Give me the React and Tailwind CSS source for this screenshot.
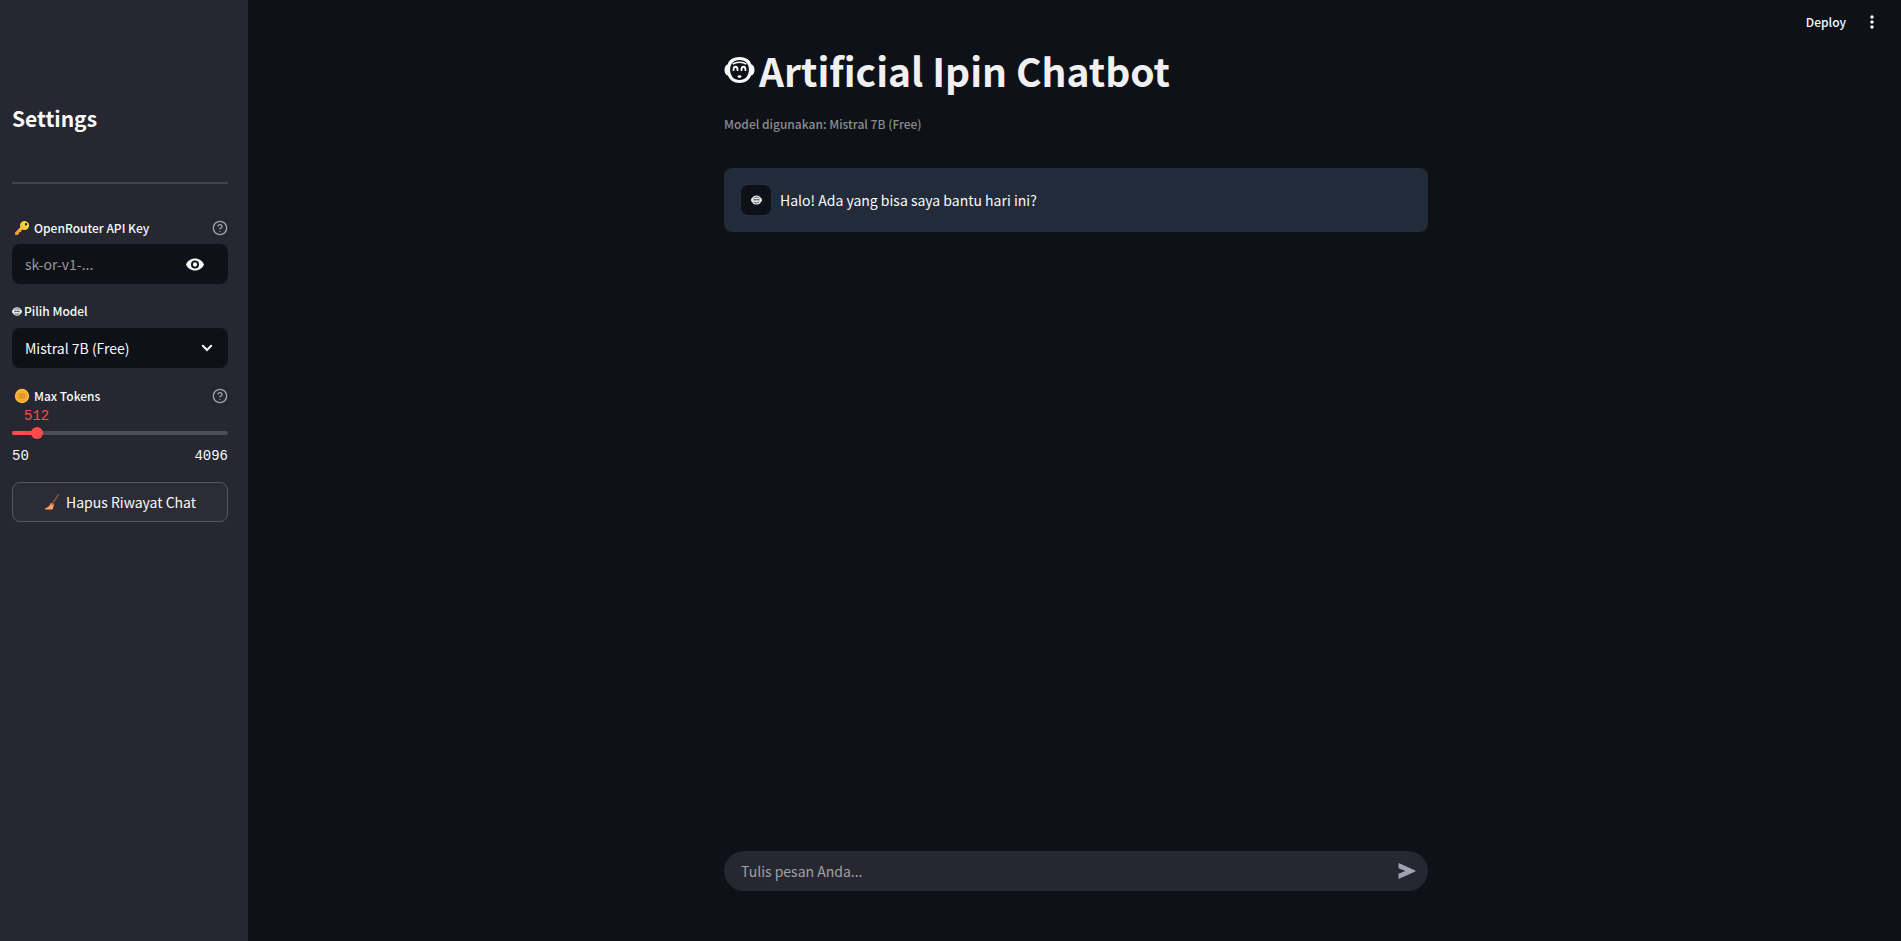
import { useState } from "react";
import { FiHelpCircle } from "react-icons/fi";
import { MdMoreVert } from "react-icons/md";

function Face({ className }) {
  return (
    <svg viewBox="0 0 32 28" className={className} aria-hidden="true">
      <path
        d="M16 0.5C9.5 0.5 5 3.6 3.9 8.1C1.8 8.700 0.5 11 0.5 14C0.5 17 1.9 19.300 4 19.800C5.6 24.4 10.2 27.5 16 27.5C21.8 27.5 26.4 24.4 28 19.8C30.1 19.300 31.5 17 31.5 14C31.5 11 30.2 8.700 28.1 8.1C27 3.6 22.500 0.5 16 0.5Z"
        fill="#fafafa"
      />
      <path
        d="M16 3.600C9.800 3.600 6.300 7.600 6.300 13.500C6.300 20 10 24.400 16 24.400C22 24.400 25.700 20 25.700 13.500C25.700 7.600 22.200 3.600 16 3.600Z"
        fill="#0e1117"
      />
      <path d="M9 8C12.500 5.400 19.500 5.400 23 8" stroke="#fafafa" strokeWidth="1.500" fill="none" />
      <path
        d="M9.800 14.200C9.800 9.400 14 9.400 14 14.200M18 14.200C18 9.400 22.200 9.400 22.200 14.200"
        stroke="#fafafa"
        strokeWidth="1.900"
        strokeLinecap="round"
        fill="none"
      />
      <ellipse cx="16" cy="20.800" rx="2" ry="1.400" fill="#fafafa" />
    </svg>
  );
}

function SmallFace({ className }) {
  return (
    <svg viewBox="0 0 12 10" className={className} aria-hidden="true">
      <path
        d="M6 0C3.600 0 1.900 1.200 1.400 2.600C0.500 3 0 4 0 5C0 6 0.500 7 1.400 7.400C2 8.900 3.800 10 6 10C8.200 10 10 8.900 10.600 7.400C11.500 7 12 6 12 5C12 4 11.500 3 10.600 2.600C10.100 1.200 8.400 0 6 0Z"
        fill="#ececee"
      />
      <path d="M2.800 3C4 1.400 8 1.400 9.200 3" stroke="#0e1117" strokeWidth="0.700" fill="none" />
      <path d="M2.700 4.800H9.300" stroke="#0e1117" strokeWidth="0.900" fill="none" />
      <path d="M3 6.800C4.200 8.800 7.800 8.800 9 6.800" stroke="#0e1117" strokeWidth="0.800" fill="none" />
    </svg>
  );
}

function KeyIcon() {
  return (
    <svg viewBox="0 0 16 16" className="h-4 w-4" aria-hidden="true">
      <defs>
        <linearGradient id="key" x1="1" y1="0" x2="0" y2="1">
          <stop offset="0.3" stopColor="#fdd33c" />
          <stop offset="1" stopColor="#f08c3c" />
        </linearGradient>
      </defs>
      <path
        fill="url(#key)"
        fillRule="evenodd"
        d="M10.500 1A4.500 4.500 0 0 0 6.300 7.200L1.300 12.200Q1 12.500 1 13V14.500Q1 15 1.500 15H3.200Q3.600 15 3.900 14.700L5 13.600V12.300H6.300L7.400 11.200V10.200L8.300 9.400A4.500 4.500 0 1 0 10.500 1ZM12 3A1.200 1.200 0 1 1 12 5.400A1.200 1.200 0 0 1 12 3Z"
      />
    </svg>
  );
}

function CoinIcon() {
  return (
    <svg viewBox="0 0 16 16" className="h-4 w-4" aria-hidden="true">
      <circle cx="8" cy="8" r="7.200" fill="#f9c23c" />
      <circle cx="8" cy="8" r="5.600" fill="#e89a2c" />
      <circle cx="8" cy="8" r="4.900" fill="#f5b03a" />
      <path d="M5.500 6H10.500V10H5.500ZM7.200 6V10M8.800 6V10" stroke="#d98b22" strokeWidth="0.900" fill="none" />
    </svg>
  );
}

function BroomIcon() {
  return (
    <svg viewBox="0 0 16 16" className="h-4 w-4" aria-hidden="true">
      <path d="M14.200 0.600L8.600 9.800" stroke="#8c5543" strokeWidth="1.400" strokeLinecap="round" />
      <path d="M6.800 9.200L9.900 11.200L8.600 15.600H1L1.400 14.300C3.800 13.600 5.800 11.800 6.800 9.200Z" fill="#f8a366" />
      <path d="M7.200 8.400L10.400 10.500L9.700 12L6.200 9.800Z" fill="#d0703f" />
    </svg>
  );
}

function EyeIcon() {
  return (
    <svg viewBox="0 0 20 14" className="h-[13px] w-5" aria-hidden="true">
      <path
        fill="#fafafa"
        fillRule="evenodd"
        d="M10 0.500C5.500 0.500 1.900 3.200 0.300 7C1.900 10.800 5.500 13.500 10 13.500C14.500 13.500 18.100 10.800 19.700 7C18.100 3.200 14.500 0.500 10 0.500ZM10 2.700A4.300 4.300 0 1 1 10 11.300A4.300 4.300 0 0 1 10 2.700ZM10 4.700A2.300 2.300 0 1 0 10 9.300A2.300 2.300 0 0 0 10 4.700Z"
      />
    </svg>
  );
}

function SendIcon() {
  return (
    <svg viewBox="0 0 18 16" className="h-4 w-[18px]" aria-hidden="true">
      <path
        fill="#a3a2b5"
        d="M0.500 0.700Q0.500 0 1.200 0.200L17.300 7.500Q18 8 17.300 8.500L1.200 15.800Q0.500 16 0.500 15.300V10.700L7.500 8L0.500 5.300Z"
      />
    </svg>
  );
}

function HelpButton({ label }) {
  return (
    <button type="button" aria-label={label} className="ml-auto text-[#a3a4ac]">
      <FiHelpCircle className="h-4 w-4" />
    </button>
  );
}

const MIN = 50;
const MAX = 4096;
const fieldLabel = "text-xs leading-5 font-medium";

function Sidebar({ model, setModel }) {
  const [tokens, setTokens] = useState(512);
  const [shown, setShown] = useState(false);
  const percent = ((tokens - MIN) / (MAX - MIN)) * 100;

  return (
    <aside className="w-[248px] shrink-0 bg-[#262730] pt-[104px] pr-5 pl-3">
      <h2 className="text-[21px] leading-7 font-bold">Settings</h2>
      <hr className="mt-[50px] border-t-2 border-[#42434c]" />

      <div className="mt-[34px] flex items-center">
        <label htmlFor="api-key" className={`flex items-center gap-1 pl-[2px] ${fieldLabel}`}>
          <KeyIcon />
          OpenRouter API Key
        </label>
        <HelpButton label="API key help" />
      </div>
      <div className="mt-[6px] flex h-10 items-center rounded-lg bg-[#0e1117] pr-[23px] pl-[13px]">
        <input
          id="api-key"
          type={shown ? "text" : "password"}
          placeholder="sk-or-v1-..."
          className="min-w-0 flex-1 bg-transparent text-sm outline-none placeholder:text-[#97989d]"
        />
        <button type="button" aria-label="Show key" onClick={() => setShown(!shown)}>
          <EyeIcon />
        </button>
      </div>

      <label htmlFor="model" className={`mt-[17px] flex items-center gap-[2px] ${fieldLabel}`}>
        <SmallFace className="h-[9px] w-[10px]" />
        Pilih Model
      </label>
      <div className="relative mt-[7px]">
        <select
          id="model"
          value={model}
          onChange={(e) => setModel(e.target.value)}
          className="h-10 w-full appearance-none rounded-lg bg-[#0e1117] px-[13px] text-sm outline-none"
        >
          <option>Mistral 7B (Free)</option>
        </select>
        <svg
          viewBox="0 0 12 8"
          className="pointer-events-none absolute top-4 right-[15px] h-2 w-3"
          aria-hidden="true"
        >
          <path d="M1.800 1.800L6 6L10.200 1.800" stroke="#fafafa" strokeWidth="2" strokeLinecap="round" fill="none" />
        </svg>
      </div>

      <div className="mt-[18px] flex items-center">
        <label htmlFor="tokens" className={`flex items-center gap-1 pl-[2px] ${fieldLabel}`}>
          <CoinIcon />
          Max Tokens
        </label>
        <HelpButton label="Max tokens help" />
      </div>
      <div className="font-['Liberation_Mono',monospace] text-sm leading-5">
        <div className="relative h-5">
          <output
            htmlFor="tokens"
            className="absolute top-0 -translate-x-1/2 text-[#ff4b4b]"
            style={{ left: `${percent}%` }}
          >
            {tokens}
          </output>
        </div>
        <div className="relative mt-[5px] h-1 rounded-full bg-[#4c4d57]">
          <div className="h-1 rounded-full bg-[#ff4b4b]" style={{ width: `${percent}%` }} />
          <input
            id="tokens"
            type="range"
            min={MIN}
            max={MAX}
            value={tokens}
            onChange={(e) => setTokens(Number(e.target.value))}
            className="absolute -inset-x-[6px] -top-1 h-3 appearance-none bg-transparent [&::-webkit-slider-thumb]:h-3 [&::-webkit-slider-thumb]:w-3 [&::-webkit-slider-thumb]:appearance-none [&::-webkit-slider-thumb]:rounded-full [&::-webkit-slider-thumb]:bg-[#ff4b4b]"
          />
        </div>
        <div className="mt-[11px] flex justify-between">
          <span>{MIN}</span>
          <span>{MAX}</span>
        </div>
      </div>

      <button
        type="button"
        className="mt-4 flex h-10 w-full items-center justify-center gap-[6px] rounded-lg border border-[#55565f] bg-[#2b2c36] text-sm"
      >
        <BroomIcon />
        Hapus Riwayat Chat
      </button>
    </aside>
  );
}

export default function App() {
  const [model, setModel] = useState("Mistral 7B (Free)");

  return (
    <div className="flex min-h-screen bg-[#0e1117] font-['Noto_Sans_CJK_JP',sans-serif] text-[#fafafa]">
      <Sidebar model={model} setModel={setModel} />
      <div className="flex min-w-0 flex-1 flex-col">
        <header className="flex h-11 items-center justify-end gap-4 pr-[19px]">
          <button type="button" className="text-xs leading-5 font-medium">
            Deploy
          </button>
          <button type="button" aria-label="Menu">
            <MdMoreVert className="h-5 w-5" />
          </button>
        </header>
        <main className="flex flex-1 flex-col pl-[3px]">
          <div className="mx-auto flex w-full max-w-[704px] flex-1 flex-col pb-[50px]">
            <h1 className="flex items-center gap-1 text-[39px] leading-[52px] font-bold text-[#f0f0f0]">
              <Face className="h-7 w-[31px]" />
              Artificial Ipin Chatbot
            </h1>
            <p className="mt-[18px] text-xs leading-5 font-medium text-[#8b8c90]">Model digunakan: {model}</p>
            <div className="mt-[34px] flex h-16 items-center gap-2 rounded-lg bg-[#222b3a] px-4">
              <div className="flex h-8 w-8 items-center justify-center rounded-lg border border-[#2a2e38] bg-[#0e1117]">
                <SmallFace className="h-[10px] w-[11px]" />
              </div>
              <p className="text-sm leading-6">Halo! Ada yang bisa saya bantu hari ini?</p>
            </div>
            <form
              onSubmit={(e) => e.preventDefault()}
              className="mt-auto flex h-10 items-center rounded-full bg-[#262730] pr-3 pl-[17px]"
            >
              <input
                type="text"
                aria-label="Tulis pesan Anda"
                placeholder="Tulis pesan Anda..."
                className="min-w-0 flex-1 bg-transparent text-sm outline-none placeholder:text-[#a0a1a5]"
              />
              <button type="submit" aria-label="Kirim">
                <SendIcon />
              </button>
            </form>
          </div>
        </main>
      </div>
    </div>
  );
}
